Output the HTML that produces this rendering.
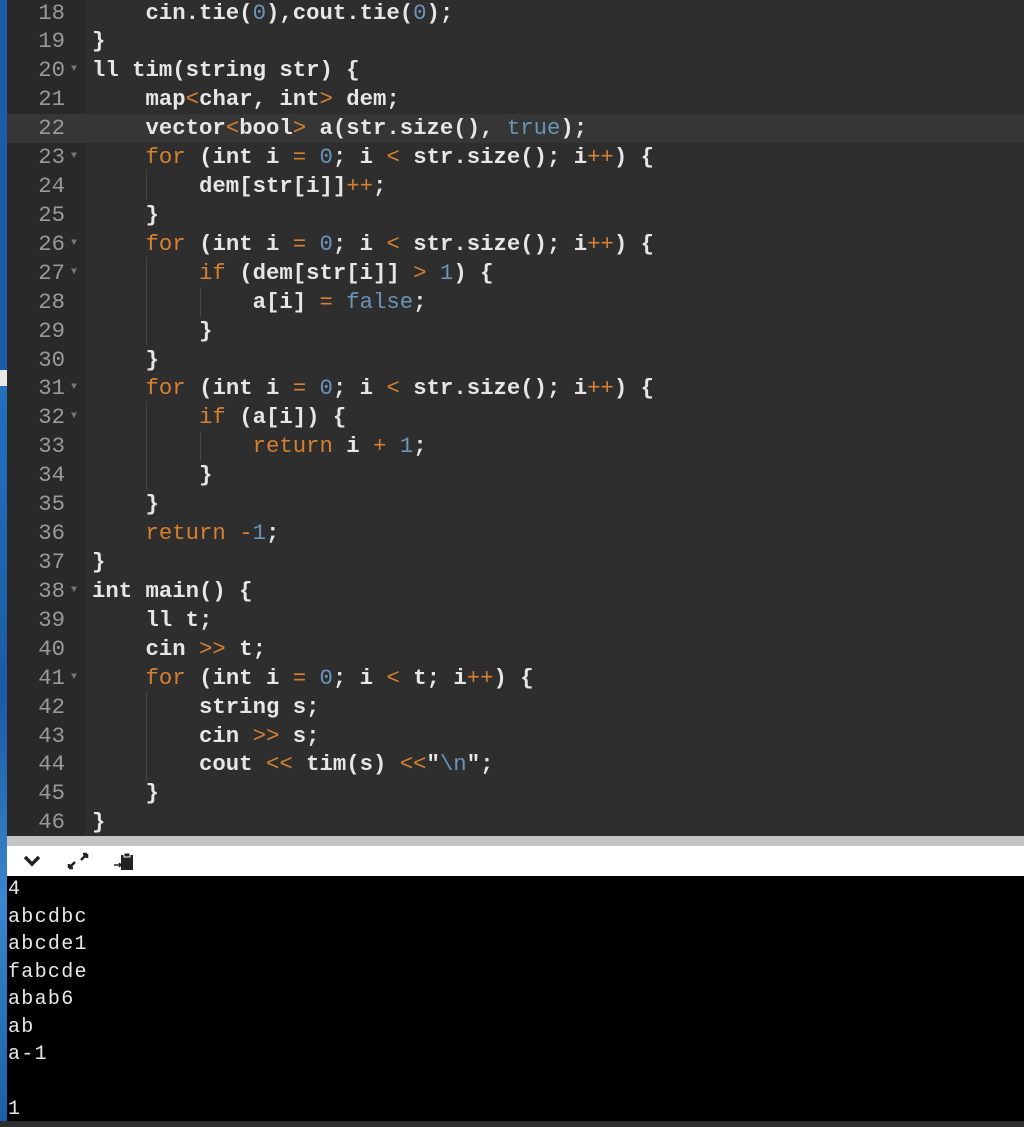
<!DOCTYPE html>
<html><head><meta charset="utf-8"><style>
*{margin:0;padding:0;box-sizing:border-box}
body{width:1024px;height:1121px;overflow:hidden;background:#2e2e2e;position:relative;font-family:"Liberation Mono",monospace}
#strip{position:absolute;left:0;top:0;width:7px;height:1121px;background:linear-gradient(#1b5ea8 0,#1b5ea8 370px,#e8e8e8 370px,#e8e8e8 386px,#2270bf 386px,#1a5ca5 700px,#3a86cf 900px,#1b5ea8 1121px)}
#gut{position:absolute;left:7px;top:0;width:78px;height:836px;background:#292929}
#code{position:absolute;left:7px;top:-1.5px;width:1017px}
.l{height:28.93px;line-height:28.93px;font-size:22.3px;white-space:pre;position:relative;color:#e6e6e6;font-weight:bold}
.l.act{background:#363636}
.n{position:absolute;left:0;width:58px;text-align:right;color:#9a9a9a;font-weight:normal}
.f{position:absolute;left:64px;top:0;color:#777;font-size:10px}
.c{position:absolute;left:85px}
.k{color:#d7802f;font-weight:normal}
.o{color:#d7802f;font-weight:normal}
.b{color:#6a94b8;font-weight:normal}
.g{position:absolute;width:1px;background:#454545}
#bar{position:absolute;left:7px;top:836px;width:1017px;height:10px;background:#c4c4c4}
#tb{position:absolute;left:7px;top:846px;width:1017px;height:30px;background:#fff}
#con{position:absolute;left:7px;top:876px;width:1017px;height:245px;background:#000;color:#e8e8e8;font-size:20px;padding-left:1px;padding-top:3px}
#con div{height:27.5px;line-height:22px;letter-spacing:1.3px}
</style></head><body>
<div id="gut"></div>
<div class="g" style="left:146px;top:170px;height:30px"></div>
<div class="g" style="left:146px;top:257px;height:88px"></div>
<div class="g" style="left:200px;top:287px;height:30px"></div>
<div class="g" style="left:146px;top:402px;height:88px"></div>
<div class="g" style="left:200px;top:431px;height:30px"></div>
<div class="g" style="left:146px;top:692px;height:88px"></div>
<div id="code">
<div class="l"><span class="n">18</span><span class="c">    cin.tie(<span class="b">0</span>),cout.tie(<span class="b">0</span>);</span></div>
<div class="l"><span class="n">19</span><span class="c">}</span></div>
<div class="l"><span class="n">20</span><span class="f">▼</span><span class="c">ll tim(string str) {</span></div>
<div class="l"><span class="n">21</span><span class="c">    map<span class="o">&lt;</span>char, int<span class="o">&gt;</span> dem;</span></div>
<div class="l act"><span class="n">22</span><span class="c">    vector<span class="o">&lt;</span>bool<span class="o">&gt;</span> a(str.size(), <span class="b">true</span>);</span></div>
<div class="l"><span class="n">23</span><span class="f">▼</span><span class="c">    <span class="k">for</span> (int i <span class="o">=</span> <span class="b">0</span>; i <span class="o">&lt;</span> str.size(); i<span class="o">++</span>) {</span></div>
<div class="l"><span class="n">24</span><span class="c">        dem[str[i]]<span class="o">++</span>;</span></div>
<div class="l"><span class="n">25</span><span class="c">    }</span></div>
<div class="l"><span class="n">26</span><span class="f">▼</span><span class="c">    <span class="k">for</span> (int i <span class="o">=</span> <span class="b">0</span>; i <span class="o">&lt;</span> str.size(); i<span class="o">++</span>) {</span></div>
<div class="l"><span class="n">27</span><span class="f">▼</span><span class="c">        <span class="k">if</span> (dem[str[i]] <span class="o">&gt;</span> <span class="b">1</span>) {</span></div>
<div class="l"><span class="n">28</span><span class="c">            a[i] <span class="o">=</span> <span class="b">false</span>;</span></div>
<div class="l"><span class="n">29</span><span class="c">        }</span></div>
<div class="l"><span class="n">30</span><span class="c">    }</span></div>
<div class="l"><span class="n">31</span><span class="f">▼</span><span class="c">    <span class="k">for</span> (int i <span class="o">=</span> <span class="b">0</span>; i <span class="o">&lt;</span> str.size(); i<span class="o">++</span>) {</span></div>
<div class="l"><span class="n">32</span><span class="f">▼</span><span class="c">        <span class="k">if</span> (a[i]) {</span></div>
<div class="l"><span class="n">33</span><span class="c">            <span class="k">return</span> i <span class="o">+</span> <span class="b">1</span>;</span></div>
<div class="l"><span class="n">34</span><span class="c">        }</span></div>
<div class="l"><span class="n">35</span><span class="c">    }</span></div>
<div class="l"><span class="n">36</span><span class="c">    <span class="k">return</span> <span class="o">-</span><span class="b">1</span>;</span></div>
<div class="l"><span class="n">37</span><span class="c">}</span></div>
<div class="l"><span class="n">38</span><span class="f">▼</span><span class="c">int main() {</span></div>
<div class="l"><span class="n">39</span><span class="c">    ll t;</span></div>
<div class="l"><span class="n">40</span><span class="c">    cin <span class="o">&gt;&gt;</span> t;</span></div>
<div class="l"><span class="n">41</span><span class="f">▼</span><span class="c">    <span class="k">for</span> (int i <span class="o">=</span> <span class="b">0</span>; i <span class="o">&lt;</span> t; i<span class="o">++</span>) {</span></div>
<div class="l"><span class="n">42</span><span class="c">        string s;</span></div>
<div class="l"><span class="n">43</span><span class="c">        cin <span class="o">&gt;&gt;</span> s;</span></div>
<div class="l"><span class="n">44</span><span class="c">        cout <span class="o">&lt;&lt;</span> tim(s) <span class="o">&lt;&lt;</span>"<span class="b">\n</span>";</span></div>
<div class="l"><span class="n">45</span><span class="c">    }</span></div>
<div class="l"><span class="n">46</span><span class="c">}</span></div>
</div>
<div id="bar"></div>
<div id="tb">
<svg width="140" height="30" style="position:absolute;left:0;top:0">
<path d="M18 11 L25 18 L32 11" stroke="#222" stroke-width="3.5" fill="none"/>
<path d="M62 22 L68 16 M62 22 L62 18 M62 22 L66 22 M80 8 L74 14 M80 8 L80 12 M80 8 L76 8" stroke="#222" stroke-width="2.5" fill="none"/>
<rect x="114" y="9" width="12" height="15" fill="#222"/><rect x="117" y="7" width="6" height="4" fill="#222" stroke="#fff" stroke-width="1"/>
<path d="M107 19 L114 19 M112 17 L114 19 L112 21" stroke="#222" stroke-width="1.5" fill="none"/>
</svg>
</div>
<div id="con">
<div>4</div><div>abcdbc</div><div>abcde1</div><div>fabcde</div><div>abab6</div><div>ab</div><div>a-1</div><div></div><div>1</div>
</div>
<div id="strip"></div>
</body></html>
